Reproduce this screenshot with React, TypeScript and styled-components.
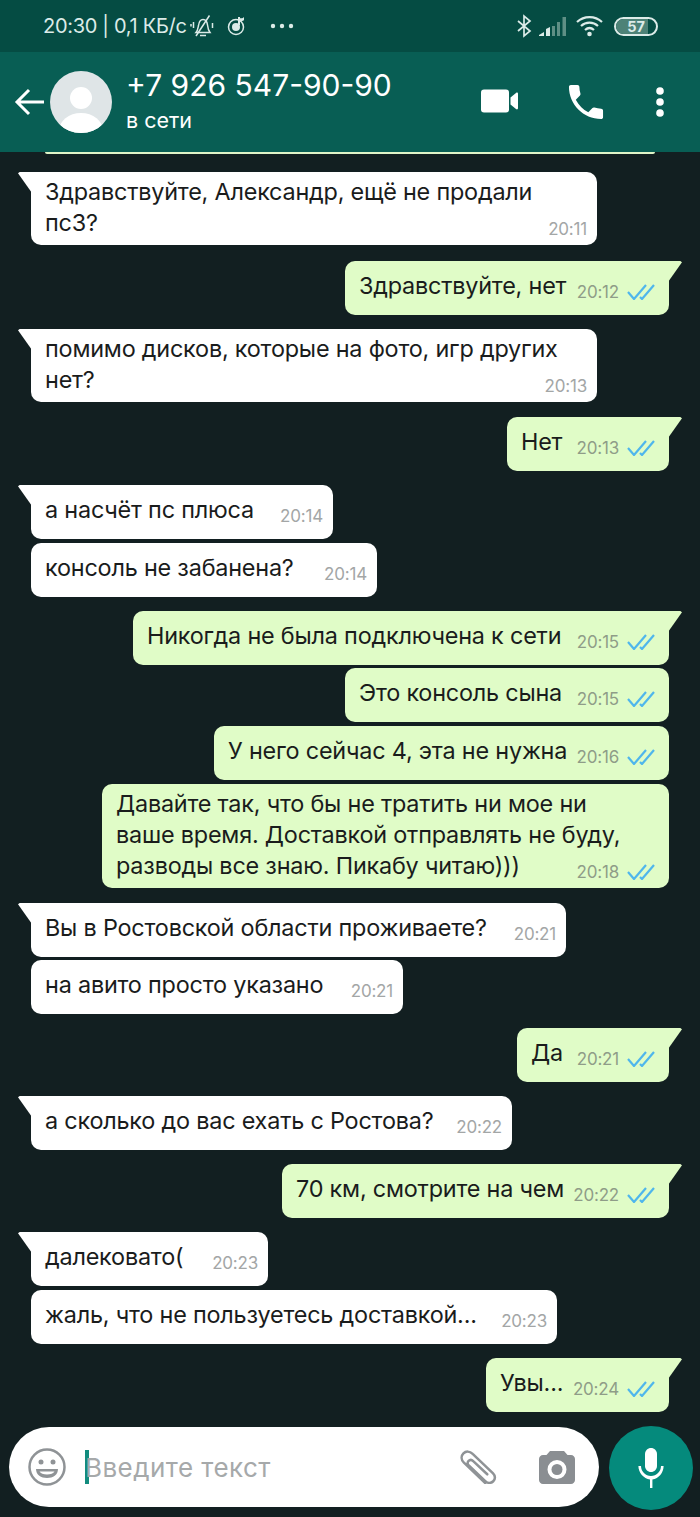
import styled, { createGlobalStyle } from "styled-components";

const GlobalStyle = createGlobalStyle`
  html, body {
    margin: 0;
    padding: 0;
    background: #121f21;
  }
  * {
    box-sizing: border-box;
  }
`;

const Page = styled.div`
  width: 700px;
  height: 1517px;
  display: flex;
  flex-direction: column;
  overflow: hidden;
  background: #121f21;
  font-family: Inter, "Liberation Sans", sans-serif;
`;

const StatusBar = styled.div`
  height: 52px;
  flex: none;
  display: flex;
  align-items: center;
  justify-content: space-between;
  padding: 0 42px 0 43px;
  background: #054c43;
  color: #dcebe8;
  font-size: 20px;
`;

const StatusGroup = styled.div`
  display: flex;
  align-items: center;
`;

const StatusText = styled.span`
  white-space: nowrap;
  letter-spacing: -0.3px;
`;

const Header = styled.header`
  height: 100px;
  flex: none;
  display: flex;
  align-items: center;
  padding: 0 35px 0 14px;
  background: #085e54;
  color: #fff;
`;

const Avatar = styled.div`
  width: 62px;
  height: 62px;
  flex: none;
  margin-left: 6px;
  border-radius: 50%;
  overflow: hidden;
  background: #dfe5e7;
`;

const Contact = styled.div`
  flex: 1;
  margin-left: 14px;
  margin-top: -7px;
`;

const Phone = styled.div`
  font-size: 30px;
  line-height: 40px;
  white-space: nowrap;
`;

const Presence = styled.div`
  margin-top: 2px;
  font-size: 21.5px;
  line-height: 26px;
`;

const HeaderActions = styled.div`
  display: flex;
  align-items: center;
  gap: 50px;
`;

const MessageList = styled.main`
  height: 1275px;
  flex: none;
  display: flex;
  flex-direction: column;
  overflow: hidden;
`;

const ClippedBubble = styled.div`
  height: 2px;
  flex: none;
  margin: 0 45px 18px;
  background: #dff5c8;
  border-radius: 0 0 6px 6px;
`;

const Bubble = styled.div<{ $out?: boolean; $tail?: boolean; $single?: boolean; $gap: number; $width: number }>`
  position: relative;
  flex: none;
  width: ${(p) => p.$width}px;
  margin-top: ${(p) => p.$gap}px;
  margin-left: ${(p) => (p.$out ? "auto" : "31px")};
  margin-right: ${(p) => (p.$out ? "31px" : "0")};
  padding: ${(p) => (p.$single ? "9px" : "4px")} ${(p) => (p.$out ? "14px" : "10px")}
    ${(p) => (p.$single ? "14px" : "7px")} 14px;
  border-radius: 10px;
  border-top-left-radius: ${(p) => (p.$tail && !p.$out ? "0" : "10px")};
  border-top-right-radius: ${(p) => (p.$tail && p.$out ? "0" : "10px")};
  background: ${(p) => (p.$out ? "#e0fcc7" : "#ffffff")};
  color: #1a1c1c;
  font-size: 23.4px;
  line-height: 31px;
  letter-spacing: -0.2px;

  &::before {
    content: ${(p) => (p.$tail ? '""' : "none")};
    position: absolute;
    top: 0;
    width: 14px;
    height: 21px;
    background: inherit;
    ${(p) =>
      p.$out
        ? "right: -13px; clip-path: polygon(0 0, 88% 0, 100% 6%, 0 100%);"
        : "left: -13px; clip-path: polygon(100% 0, 12% 0, 0 6%, 100% 100%);"}
  }
`;

const LastRow = styled.div`
  display: flex;
  justify-content: space-between;
  align-items: flex-end;
`;

const Text = styled.div`
  white-space: nowrap;
`;

const Meta = styled.div`
  display: flex;
  align-items: center;
  gap: 8px;
  flex: none;
  height: 24px;
  margin-bottom: -3px;
`;

const Time = styled.span<{ $out?: boolean }>`
  color: ${(p) => (p.$out ? "#8f9c88" : "#a3a6a6")};
  font-size: 17px;
  line-height: 24px;
  letter-spacing: -0.2px;
`;

const Composer = styled.footer`
  height: 90px;
  flex: none;
  display: flex;
  gap: 10px;
  padding: 0 7px 0 9px;
`;

const InputPill = styled.div`
  width: 590px;
  height: 80px;
  flex: none;
  display: flex;
  align-items: center;
  padding: 0 24px 0 19px;
  border-radius: 40px;
  background: #fff;
`;

const Caret = styled.div`
  width: 4px;
  height: 34px;
  flex: none;
  margin-left: 19px;
  background: #128c7e;
`;

const Placeholder = styled.div`
  flex: 1;
  margin-left: -4px;
  color: #a6a9aa;
  font-size: 26px;
  letter-spacing: 0.45px;
`;

const MicButton = styled.div`
  width: 84px;
  height: 84px;
  flex: none;
  margin-top: -1px;
  display: flex;
  align-items: center;
  justify-content: center;
  border-radius: 50%;
  background: #058a7c;
`;

const Battery = styled.div`
  position: relative;
  width: 44px;
  height: 19px;
  margin-left: 11px;
  border: 2px solid #dcebe8;
  border-radius: 10px;
  overflow: hidden;
  color: #dcebe8;
  font-size: 14.5px;
  font-weight: 700;
  line-height: 15px;
  text-align: center;
`;

const BatteryFill = styled.div`
  position: absolute;
  inset: 0 8px 0 0;
  background: #4d8277;
`;

const BatteryLabel = styled.span`
  position: relative;
`;

const IconSlot = styled.svg<{ $ml?: number; $mt?: number }>`
  display: block;
  flex: none;
  margin-left: ${(p) => p.$ml ?? 0}px;
  margin-top: ${(p) => p.$mt ?? 0}px;
`;

function Ticks() {
  return (
    <IconSlot width="28" height="16" viewBox="0 0 28 16" fill="none" stroke="#4fb6ec" strokeWidth="2.2">
      <path d="M1 8l6 7L19 1" />
      <path d="M13 13l2 2L27 1" />
    </IconSlot>
  );
}

type Msg = {
  lines: string[];
  time: string;
  out?: boolean;
  tail?: boolean;
  gap: number;
  width: number;
};

const messages: Msg[] = [
  { lines: ["Здравствуйте, Александр, ещё не продали", "пс3?"], time: "20:11", tail: true, gap: 0, width: 566 },
  { lines: ["Здравствуйте, нет"], time: "20:12", out: true, tail: true, gap: 16, width: 324 },
  { lines: ["помимо дисков, которые на фото, игр других", "нет?"], time: "20:13", tail: true, gap: 14, width: 566 },
  { lines: ["Нет"], time: "20:13", out: true, tail: true, gap: 15, width: 162 },
  { lines: ["а насчёт пс плюса"], time: "20:14", tail: true, gap: 14, width: 302 },
  { lines: ["консоль не забанена?"], time: "20:14", gap: 4, width: 346 },
  { lines: ["Никогда не была подключена к сети"], time: "20:15", out: true, tail: true, gap: 14, width: 536 },
  { lines: ["Это консоль сына"], time: "20:15", out: true, gap: 3, width: 324 },
  { lines: ["У него сейчас 4, эта не нужна"], time: "20:16", out: true, gap: 4, width: 455 },
  {
    lines: [
      "Давайте так, что бы не тратить ни мое ни",
      "ваше время. Доставкой отправлять не буду,",
      "разводы все знаю. Пикабу читаю)))",
    ],
    time: "20:18",
    out: true,
    gap: 4,
    width: 567,
  },
  { lines: ["Вы в Ростовской области проживаете?"], time: "20:21", tail: true, gap: 15, width: 535 },
  { lines: ["на авито просто указано"], time: "20:21", gap: 3, width: 372 },
  { lines: ["Да"], time: "20:21", out: true, tail: true, gap: 14, width: 152 },
  { lines: ["а сколько до вас ехать с Ростова?"], time: "20:22", tail: true, gap: 14, width: 481 },
  { lines: ["70 км, смотрите на чем"], time: "20:22", out: true, tail: true, gap: 14, width: 387 },
  { lines: ["далековато("], time: "20:23", tail: true, gap: 14, width: 237 },
  { lines: ["жаль, что не пользуетесь доставкой..."], time: "20:23", gap: 4, width: 526 },
  { lines: ["Увы..."], time: "20:24", out: true, tail: true, gap: 14, width: 183 },
];

export default function App() {
  return (
    <Page>
      <GlobalStyle />
      <StatusBar>
        <StatusGroup>
          <StatusText>20:30 | 0,1 КБ/с</StatusText>
          <IconSlot $ml={3} width="24" height="24" viewBox="0 0 24 24" fill="none" stroke="#dcebe8" strokeWidth="1.5">
            <path d="M6 18.500c1.800-2 2-4.500 2.500-7C9 8 10.500 5.500 13 5.500c3 0 4.200 2.700 4.500 5.500.3 2.800 1 5.500 2.500 7.500H6z" />
            <path d="M10 21.500h6" />
            <path d="M19.500 1.500L6 22" />
            <path d="M3.500 8v6M1 10v2.500M22.500 9v5" />
          </IconSlot>
          <IconSlot $ml={12} width="22" height="24" viewBox="0 0 22 24">
            <circle cx="10" cy="13" r="7.500" fill="none" stroke="#dcebe8" strokeWidth="1.500" />
            <circle cx="10" cy="13" r="4" fill="#dcebe8" />
            <path d="M12 3h2v8h-2zM13 3c1 2 4 1.500 5 0v3c-1 1.500-4 1.500-5 0z" fill="#dcebe8" />
          </IconSlot>
          <IconSlot $ml={22} width="24" height="6" viewBox="0 0 24 6" fill="#dcebe8">
            <circle cx="3" cy="3" r="2.200" />
            <circle cx="12" cy="3" r="2.200" />
            <circle cx="21" cy="3" r="2.200" />
          </IconSlot>
        </StatusGroup>
        <StatusGroup>
          <IconSlot width="16" height="24" viewBox="0 0 16 24" fill="none" stroke="#dcebe8" strokeWidth="1.700">
            <path d="M2 7l12 10-6 5V2l6 5L2 17" />
          </IconSlot>
          <IconSlot $ml={7} width="27" height="20" viewBox="0 0 27 20">
            <path d="M0 19l5-3v4H0z" fill="#dcebe8" />
            <path d="M7 13l4-2v9H7z" fill="#dcebe8" />
            <path d="M13 10h3v10h-3zM18 6h3v14h-3zM23.500 1H27v19h-3.500z" fill="#5f8f85" />
          </IconSlot>
          <IconSlot $ml={10} width="27" height="22" viewBox="0 0 27 22" fill="none" stroke="#dcebe8" strokeWidth="2.200">
            <path d="M1 7c7-6.500 18-6.500 25 0M5 11c4.800-4.500 12.200-4.500 17 0M9 15c2.700-2.400 6.300-2.400 9 0" />
            <circle cx="13.500" cy="19" r="1.200" fill="#dcebe8" />
          </IconSlot>
          <Battery>
            <BatteryFill />
            <BatteryLabel>57</BatteryLabel>
          </Battery>
        </StatusGroup>
      </StatusBar>

      <Header>
        <IconSlot width="30" height="28" viewBox="0 0 30 28" fill="none" stroke="#fff" strokeWidth="3">
          <path d="M30 14H3M15 2L3 14l12 12" />
        </IconSlot>
        <Avatar>
          <IconSlot width="62" height="62" viewBox="0 0 62 62" fill="#fff">
            <circle cx="31" cy="27" r="11" />
            <ellipse cx="31" cy="60" rx="22" ry="18" />
          </IconSlot>
        </Avatar>
        <Contact>
          <Phone>+7 926 547-90-90</Phone>
          <Presence>в сети</Presence>
        </Contact>
        <HeaderActions>
          <IconSlot $mt={-2} width="37" height="24" viewBox="0 0 37 24" fill="#fff">
            <rect width="28" height="23" y="0.500" rx="3" />
            <path d="M29.500 8.500L35 4c1-.8 2-.3 2 1v14c0 1.300-1 1.800-2 1l-5.500-4.500z" />
          </IconSlot>
          <IconSlot width="36" height="36" viewBox="2.500 2.500 19 19" fill="#fff">
            <path d="M6.620 10.790c1.440 2.830 3.760 5.140 6.590 6.590l2.200-2.200c.27-.27.67-.36 1.020-.24 1.120.37 2.330.57 3.570.57.55 0 1 .45 1 1V20c0 .55-.45 1-1 1-9.390 0-17-7.610-17-17 0-.55.45-1 1-1h3.500c.55 0 1 .45 1 1 0 1.250.2 2.450.57 3.570.11.35.03.74-.25 1.020l-2.200 2.200z" />
          </IconSlot>
          <IconSlot $ml={1} width="10" height="30" viewBox="0 0 10 30" fill="#fff">
            <circle cx="5" cy="4" r="3.800" />
            <circle cx="5" cy="15" r="3.800" />
            <circle cx="5" cy="26" r="3.800" />
          </IconSlot>
        </HeaderActions>
      </Header>

      <MessageList>
        <ClippedBubble />
        {messages.map((m, i) => (
          <Bubble key={i} $out={m.out} $tail={m.tail} $single={m.lines.length === 1} $gap={m.gap} $width={m.width}>
            {m.lines.slice(0, -1).map((line) => (
              <Text key={line}>{line}</Text>
            ))}
            <LastRow>
              <Text>{m.lines[m.lines.length - 1]}</Text>
              <Meta>
                <Time $out={m.out}>{m.time}</Time>
                {m.out && <Ticks />}
              </Meta>
            </LastRow>
          </Bubble>
        ))}
      </MessageList>

      <Composer>
        <InputPill>
          <IconSlot width="38" height="38" viewBox="0 0 38 38" fill="none" stroke="#8f9396" strokeWidth="2.500">
            <circle cx="19" cy="19" r="17.500" />
            <circle cx="13" cy="14" r="2.500" fill="#8f9396" stroke="none" />
            <circle cx="25" cy="14" r="2.500" fill="#8f9396" stroke="none" />
            <path d="M8 21h22c0 6-5 9-11 9S8 27 8 21z" fill="#8f9396" stroke="none" />
            <path d="M11.500 23.500h15c-1 2-4 3-7.500 3s-6.500-1-7.500-3z" fill="#fff" stroke="none" />
          </IconSlot>
          <Caret />
          <Placeholder>Введите текст</Placeholder>
          <IconSlot width="38" height="34" viewBox="2 2 37 35" fill="none" stroke="#8f9396" strokeWidth="2.600" strokeLinecap="round">
            <path d="M28 36L6 15c-3-3-3-7-.5-9.500S12 3 15 6l21 20c2.500 2.500 2.500 6 .2 8.200s-5.700 2.300-8.200-.2L11 18c-1.500-1.500-1.500-3.500-.2-4.800s3.300-1.300 4.800.2L30 27" />
          </IconSlot>
          <IconSlot $ml={42} width="36" height="33" viewBox="0 0 36 33">
            <path
              fill="#8a8e92"
              fillRule="evenodd"
              d="M11 0h14l3.500 4H32c2.200 0 4 1.800 4 4v21c0 2.200-1.800 4-4 4H4c-2.200 0-4-1.800-4-4V8c0-2.200 1.800-4 4-4h3.500L11 0zm7 9a9.500 9.500 0 100 19 9.500 9.500 0 000-19z"
            />
            <circle cx="18" cy="18.500" r="5.500" fill="#8a8e92" />
          </IconSlot>
        </InputPill>
        <MicButton>
          <IconSlot width="48" height="48" viewBox="0 0 24 24" fill="#fff">
            <path d="M12 14c1.660 0 3-1.340 3-3V5c0-1.660-1.340-3-3-3S9 3.340 9 5v6c0 1.660 1.340 3 3 3z" />
            <path d="M17 11c0 2.760-2.240 5-5 5s-5-2.240-5-5H5.700c0 3.400 2.600 6.200 5.800 6.800V22h1.200v-4.200c3.200-.6 5.600-3.400 5.600-6.800H17z" />
          </IconSlot>
        </MicButton>
      </Composer>
    </Page>
  );
}
